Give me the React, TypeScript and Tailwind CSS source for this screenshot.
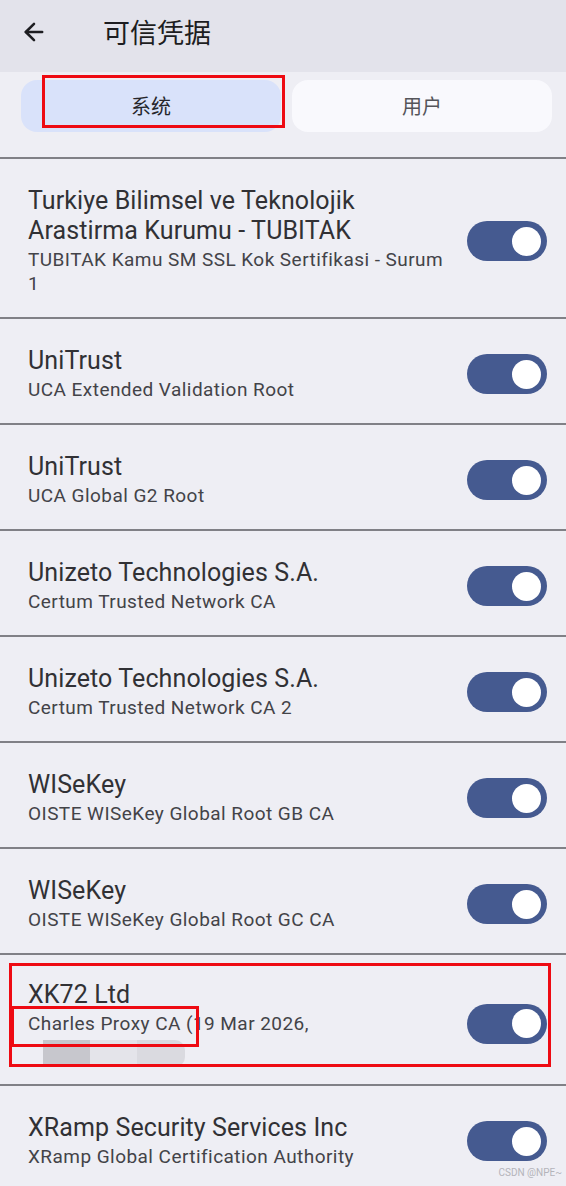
import { ArrowLeft } from "lucide-react"

interface Cert {
  org: string
  name: string
  redacted?: boolean
}

const certs: Cert[] = [
  { org: "Turkiye Bilimsel ve Teknolojik Arastirma Kurumu - TUBITAK", name: "TUBITAK Kamu SM SSL Kok Sertifikasi - Surum 1" },
  { org: "UniTrust", name: "UCA Extended Validation Root" },
  { org: "UniTrust", name: "UCA Global G2 Root" },
  { org: "Unizeto Technologies S.A.", name: "Certum Trusted Network CA" },
  { org: "Unizeto Technologies S.A.", name: "Certum Trusted Network CA 2" },
  { org: "WISeKey", name: "OISTE WISeKey Global Root GB CA" },
  { org: "WISeKey", name: "OISTE WISeKey Global Root GC CA" },
  { org: "XK72 Ltd", name: "Charles Proxy CA (19 Mar 2026,", redacted: true },
  { org: "XRamp Security Services Inc", name: "XRamp Global Certification Authority" },
]

function Toggle() {
  return (
    <div className="flex h-[40px] w-[80px] shrink-0 items-center justify-end rounded-full bg-[#455a90] pr-[6px]">
      <div className="h-[29px] w-[29px] rounded-full bg-white" />
    </div>
  )
}

function Divider() {
  return <div className="h-[2px] w-full bg-[#808086]" />
}

function CertRow({ cert }: { cert: Cert }) {
  return (
    <div className="relative">
      <div
        className={
          cert.redacted
            ? "flex items-center gap-4 pl-[28px] pr-[19px] pt-[25px] pb-[17px]"
            : "flex items-center gap-4 pl-[28px] pr-[19px] pt-[27px] pb-[21px]"
        }
      >
        <div className="min-w-0 flex-1">
          <div className="text-[25px] leading-[30px] tracking-[0.1px] text-[#313135]">{cert.org}</div>
          <div className="mt-[2px] text-[19px] leading-[24px] tracking-[0.45px] text-[#434348]">{cert.name}</div>
          {cert.redacted && (
            <div className="mt-[4px] flex h-[27px] pl-[15px]">
              <div className="w-[47px] bg-[#c7c7cd]" />
              <div className="w-[47px] bg-[#e4e4ea]" />
              <div className="w-[48px] rounded-r-[10px] bg-[#dadae0]" />
            </div>
          )}
        </div>
        <Toggle />
      </div>
      {cert.redacted && (
        <>
          <div className="absolute left-[9px] top-[8px] h-[104px] w-[542px] border-[3px] border-[#ee0a12]" />
          <div className="absolute left-[11px] top-[51px] h-[41px] w-[188px] border-[3px] border-[#ee0a12]" />
        </>
      )}
    </div>
  )
}

export default function App() {
  return (
    <div
      className="relative h-[1186px] w-[566px] overflow-hidden bg-[#eeeef4]"
      style={{ fontFamily: 'Roboto, "Noto Sans CJK SC", sans-serif' }}
    >
      <header className="flex h-[72px] items-center bg-[#e3e3eb] pb-[8px] pl-[20px]">
        <ArrowLeft className="h-[28px] w-[28px] text-[#1d1d21]" strokeWidth={2.2} />
        <h1
          className="ml-[55px] text-[27px] text-[#1d1d21]"
          style={{ fontFamily: '"Noto Sans CJK SC", sans-serif' }}
        >
          可信凭据
        </h1>
      </header>

      <div className="relative pl-[21px] pr-[14px] pt-[8px] pb-[25px]">
        <div className="flex gap-[11px]" style={{ fontFamily: '"Noto Sans CJK SC", sans-serif' }}>
          <div className="flex h-[52px] flex-1 items-center justify-center rounded-[16px] bg-[#d9e2fa] text-[20px] text-[#26262b]">
            系统
          </div>
          <div className="flex h-[52px] flex-1 items-center justify-center rounded-[16px] bg-[#f9f9fd] text-[20px] text-[#55555a]">
            用户
          </div>
        </div>
        <div className="absolute left-[42px] top-[3px] h-[53px] w-[243px] border-[3px] border-[#ee0a12]" />
      </div>

      <Divider />
      {certs.map((c, i) => (
        <div key={i}>
          <CertRow cert={c} />
          {i < certs.length - 1 && <Divider />}
        </div>
      ))}

      <div className="absolute bottom-[6px] right-[4px] text-[10px] text-[#b4b4ba]">CSDN @NPE~</div>
    </div>
  )
}
